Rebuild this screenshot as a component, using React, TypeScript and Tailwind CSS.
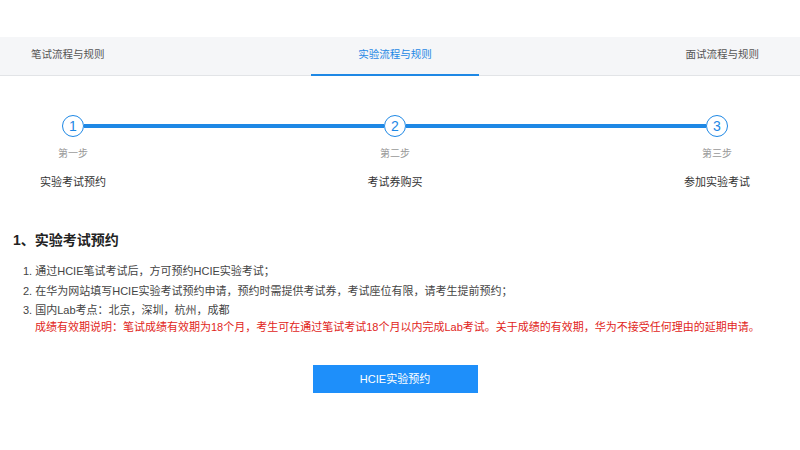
import React from 'react'

const tabs = [
  { label: '笔试流程与规则', pad: 'pl-[31px] pr-[47px]', active: false },
  { label: '实验流程与规则', pad: 'px-[47px]', active: true },
  { label: '面试流程与规则', pad: 'pl-[47px] pr-[41px]', active: false },
]

const steps = [
  { n: 1, sub: '第一步', title: '实验考试预约' },
  { n: 2, sub: '第二步', title: '考试券购买' },
  { n: 3, sub: '第三步', title: '参加实验考试' },
]

function Circle({ n }: { n: number }) {
  return (
    <div className="w-[22px] h-[22px] shrink-0 rounded-full border border-[#1e88e5] bg-white flex items-center justify-center text-[14px] leading-none text-[#1e88e5]">
      {n}
    </div>
  )
}

export default function App() {
  return (
    <div
      className="w-[800px] h-[450px] bg-white text-[#333] overflow-hidden"
      style={{ fontFamily: '"Liberation Sans", "Noto Sans CJK SC", sans-serif' }}
    >
      <div className="h-[37px]" />
      {/* tabs */}
      <div className="h-[39px] bg-[#f5f6f8] border-b border-[#e2e4e7] flex justify-between">
        {tabs.map((t) => (
          <div
            key={t.label}
            className={`${t.pad} h-full flex items-center pb-[3px] text-[10.5px] relative ${
              t.active ? 'text-[#1e88e5]' : 'text-[#555]'
            }`}
          >
            {t.label}
            {t.active && <div className="absolute left-0 right-0 bottom-[-1px] h-[2px] bg-[#1e88e5]" />}
          </div>
        ))}
      </div>

      {/* steps */}
      <div className="mx-[23px] w-[744px] mt-[39px]">
        <div className="flex items-center">
          <div className="w-[39px] shrink-0" />
          <Circle n={1} />
          <div className="flex-1 h-[4px] bg-[#1e88e5]" />
          <Circle n={2} />
          <div className="flex-1 h-[4px] bg-[#1e88e5]" />
          <Circle n={3} />
          <div className="w-[39px] shrink-0" />
        </div>
        <div className="flex justify-between">
          {steps.map((s) => (
            <div key={s.n} className="w-[100px] flex flex-col items-center">
              <div className="mt-[10px] text-[10px] leading-[14px] text-[#999]">{s.sub}</div>
              <div className="mt-[13px] text-[11px] leading-[16px] text-[#333]">{s.title}</div>
            </div>
          ))}
        </div>
      </div>

      {/* section */}
      <div className="pl-[13px] mt-[40px]">
        <h2 className="text-[14px] font-bold leading-[20px] text-[#222]">1、实验考试预约</h2>
        <ol className="mt-[13px] pl-[10px] flex flex-col gap-[2.5px] text-[11px] leading-[17px] text-[#444]">
          <li>1. 通过HCIE笔试考试后，方可预约HCIE实验考试；</li>
          <li>2. 在华为网站填写HCIE实验考试预约申请，预约时需提供考试券，考试座位有限，请考生提前预约；</li>
          <li>
            3. 国内Lab考点：北京，深圳，杭州，成都
            <div className="pl-[12px] text-[#e1251b]">
              成绩有效期说明：笔试成绩有效期为18个月，考生可在通过笔试考试18个月以内完成Lab考试。关于成绩的有效期，华为不接受任何理由的延期申请。
            </div>
          </li>
        </ol>
      </div>

      <div className="flex justify-center mt-[29px] pr-[10px]">
        <button className="w-[165px] h-[28px] bg-[#1e8ffa] text-white text-[11px] flex items-center justify-center">
          HCIE实验预约
        </button>
      </div>
    </div>
  )
}
